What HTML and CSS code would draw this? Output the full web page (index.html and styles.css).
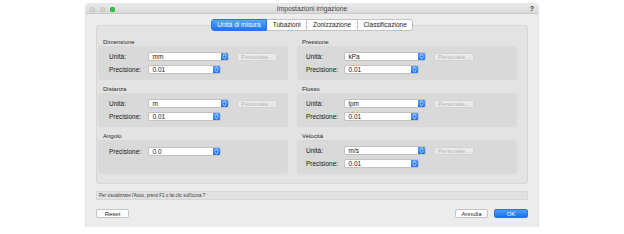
FILE: index.html
```html
<!DOCTYPE html>
<html lang="it">
<head>
<meta charset="utf-8">
<title>Impostazioni irrigazione</title>
<link rel="stylesheet" href="styles.css">
</head>
<body>
<div class="window">
  <div class="titlebar">
    <div class="lights">
      <span class="light off"></span>
      <span class="light off"></span>
      <span class="light green"></span>
    </div>
    <div class="title">Impostazioni irrigazione</div>
    <div class="help-q">?</div>
  </div>
  <div class="content">
    <div class="tabs">
      <span class="tab active">Unità di misura</span>
      <span class="tab">Tubazioni</span>
      <span class="tab">Zonizzazione</span>
      <span class="tab">Classificazione</span>
    </div>
    <div class="pane">
      <div class="grid">
        <div class="section left">
          <div class="sec-label">Dimensione</div>
          <div class="box">
            <div class="row"><span class="lbl">Unità:</span><span class="popup wide"><span class="val">mm</span><span class="stepper"><svg viewBox="0 0 7 9" width="7" height="9"><path d="M2 3.6 L3.5 2.2 L5 3.6 M2 5.4 L3.5 6.8 L5 5.4"/></svg></span></span><span class="btn-dis">Personale...</span></div>
            <div class="row"><span class="lbl">Precisione:</span><span class="popup narrow"><span class="val">0.01</span><span class="stepper"><svg viewBox="0 0 7 9" width="7" height="9"><path d="M2 3.6 L3.5 2.2 L5 3.6 M2 5.4 L3.5 6.8 L5 5.4"/></svg></span></span></div>
          </div>
        </div>
        <div class="section right">
          <div class="sec-label">Pressione</div>
          <div class="box">
            <div class="row"><span class="lbl">Unità:</span><span class="popup wide"><span class="val">kPa</span><span class="stepper"><svg viewBox="0 0 7 9" width="7" height="9"><path d="M2 3.6 L3.5 2.2 L5 3.6 M2 5.4 L3.5 6.8 L5 5.4"/></svg></span></span><span class="btn-dis">Personale...</span></div>
            <div class="row"><span class="lbl">Precisione:</span><span class="popup narrow"><span class="val">0.01</span><span class="stepper"><svg viewBox="0 0 7 9" width="7" height="9"><path d="M2 3.6 L3.5 2.2 L5 3.6 M2 5.4 L3.5 6.8 L5 5.4"/></svg></span></span></div>
          </div>
        </div>
        <div class="section left">
          <div class="sec-label">Distanza</div>
          <div class="box">
            <div class="row"><span class="lbl">Unità:</span><span class="popup wide"><span class="val">m</span><span class="stepper"><svg viewBox="0 0 7 9" width="7" height="9"><path d="M2 3.6 L3.5 2.2 L5 3.6 M2 5.4 L3.5 6.8 L5 5.4"/></svg></span></span><span class="btn-dis">Personale...</span></div>
            <div class="row"><span class="lbl">Precisione:</span><span class="popup narrow"><span class="val">0.01</span><span class="stepper"><svg viewBox="0 0 7 9" width="7" height="9"><path d="M2 3.6 L3.5 2.2 L5 3.6 M2 5.4 L3.5 6.8 L5 5.4"/></svg></span></span></div>
          </div>
        </div>
        <div class="section right">
          <div class="sec-label">Flusso</div>
          <div class="box">
            <div class="row"><span class="lbl">Unità:</span><span class="popup wide"><span class="val">lpm</span><span class="stepper"><svg viewBox="0 0 7 9" width="7" height="9"><path d="M2 3.6 L3.5 2.2 L5 3.6 M2 5.4 L3.5 6.8 L5 5.4"/></svg></span></span><span class="btn-dis">Personale...</span></div>
            <div class="row"><span class="lbl">Precisione:</span><span class="popup narrow"><span class="val">0.01</span><span class="stepper"><svg viewBox="0 0 7 9" width="7" height="9"><path d="M2 3.6 L3.5 2.2 L5 3.6 M2 5.4 L3.5 6.8 L5 5.4"/></svg></span></span></div>
          </div>
        </div>
        <div class="section left">
          <div class="sec-label">Angolo</div>
          <div class="box single">
            <div class="row"><span class="lbl">Precisione:</span><span class="popup narrow"><span class="val">0.0</span><span class="stepper"><svg viewBox="0 0 7 9" width="7" height="9"><path d="M2 3.6 L3.5 2.2 L5 3.6 M2 5.4 L3.5 6.8 L5 5.4"/></svg></span></span></div>
          </div>
        </div>
        <div class="section right">
          <div class="sec-label">Velocità</div>
          <div class="box">
            <div class="row"><span class="lbl">Unità:</span><span class="popup wide"><span class="val">m/s</span><span class="stepper"><svg viewBox="0 0 7 9" width="7" height="9"><path d="M2 3.6 L3.5 2.2 L5 3.6 M2 5.4 L3.5 6.8 L5 5.4"/></svg></span></span><span class="btn-dis">Personale...</span></div>
            <div class="row"><span class="lbl">Precisione:</span><span class="popup narrow"><span class="val">0.01</span><span class="stepper"><svg viewBox="0 0 7 9" width="7" height="9"><path d="M2 3.6 L3.5 2.2 L5 3.6 M2 5.4 L3.5 6.8 L5 5.4"/></svg></span></span></div>
          </div>
        </div>
      </div>
    </div>
    <div class="helpbar">Per visualizzare l'Aiuto, premi F1 o fai clic sull'icona ?</div>
    <div class="footer">
      <span class="btn">Reset</span>
      <span class="spacer"></span>
      <span class="btn">Annulla</span>
      <span class="btn primary">OK</span>
    </div>
  </div>
</div>
</body>
</html>
```
FILE: styles.css
```css
* { box-sizing: border-box; }
html, body { margin: 0; padding: 0; background: #ffffff; }
body { font-family: "Liberation Sans", Arial, sans-serif; color: #1e1e1e; }

.window {
  width: 452px;
  height: 223px;
  margin: 4px auto 0;
  background: #ececec;
  border-radius: 3px 3px 1px 1px;
  box-shadow: 0 0 0 0.5px #cfcfcf, 0 1px 2px rgba(0,0,0,0.12);
  overflow: hidden;
}

.titlebar {
  height: 10px;
  display: grid;
  grid-template-columns: 1fr auto 1fr;
  align-items: center;
  background: linear-gradient(#e9e9e9, #d8d8d8);
  border-bottom: 1px solid #c9c9c9;
}
.lights { display: flex; gap: 5px; padding-left: 4px; }
.light { width: 5px; height: 5px; border-radius: 50%; display: block; }
.light.off { background: #d3d3d3; box-shadow: inset 0 0 0 0.5px #bfbfbf; }
.light.green { background: #2bc840; box-shadow: inset 0 0 0 0.5px #22a834; }
.title { font-size: 6.7px; color: #444; line-height: 10px; }
.help-q { justify-self: end; padding-right: 4px; font-size: 7px; font-weight: bold; color: #333; line-height: 10px; }

.content { padding: 0 10px; }

.tabs {
  display: flex;
  justify-content: center;
  margin-top: 5px;
  height: 12px;
  position: relative;
  z-index: 2;
}
.tab {
  font-size: 6.5px;
  line-height: 10px;
  height: 12px;
  padding: 0 5.6px;
  background: #ffffff;
  border: 1px solid #c3c3c3;
  border-left: none;
  color: #1a1a1a;
}
.tab:first-child { border-left: 1px solid #c3c3c3; border-radius: 3px 0 0 3px; }
.tab:last-child { border-radius: 0 3px 3px 0; }
.tab.active {
  background: linear-gradient(#5aa4fc, #1f74f2);
  border-color: #2a76e8;
  color: #ffffff;
}

.pane {
  margin-top: -6px;
  height: 159px;
  background: #e3e3e3;
  border: 1px solid #d6d6d6;
  border-radius: 3px;
  padding: 7px 10px 0 1px;
}
.grid {
  display: grid;
  grid-template-columns: 190px 220px;
  column-gap: 9px;
}
.sec-label {
  font-size: 6px;
  line-height: 8px;
  height: 13px;
  padding-top: 5px;
  padding-left: 5px;
  color: #1f1f1f;
}
.box {
  height: 34px;
  background: #d9d9d9;
  border-radius: 3px;
  padding: 6px 0 0 11px;
}
.right .box { padding-left: 9px; }
.box.single { padding-top: 7px; }
.row {
  display: flex;
  align-items: center;
  height: 9px;
  margin-bottom: 4px;
}
.lbl {
  width: 39px;
  font-size: 6.5px;
  color: #161616;
}
.right .lbl { width: 38px; }

.popup {
  display: flex;
  height: 9px;
  background: #ffffff;
  border: 0.5px solid #c2c2c2;
  border-radius: 2px;
  overflow: hidden;
}
.popup.wide { width: 81px; }
.popup.narrow { width: 73px; }
.right .popup.wide { width: 82px; }
.right .popup.narrow { width: 75px; }
.val {
  flex: 1;
  font-size: 6.5px;
  line-height: 8px;
  padding-left: 3.5px;
  color: #161616;
}
.stepper {
  width: 7px;
  height: 100%;
  background: linear-gradient(#4f9bfb, #1d70ef);
  display: flex;
  align-items: center;
  justify-content: center;
}
.stepper svg { display: block; }
.stepper path {
  fill: none;
  stroke: #ffffff;
  stroke-width: 0.8;
  stroke-linecap: round;
  stroke-linejoin: round;
}

.btn-dis {
  margin-left: 8px;
  width: 40px;
  height: 8px;
  border: 0.5px solid #d2d2d2;
  background: #eaeaea;
  border-radius: 1.5px;
  font-size: 6px;
  line-height: 7px;
  text-align: center;
  color: #b3b3b3;
}

.helpbar {
  margin-top: 7px;
  height: 9px;
  background: #e1e1e1;
  border: 0.5px solid #d6d6d6;
  font-size: 4.5px;
  line-height: 8px;
  padding-left: 2px;
  color: #3a3a3a;
}

.footer {
  display: flex;
  align-items: center;
  margin-top: 9px;
  height: 9px;
  gap: 6px;
}
.spacer { flex: 1; }
.btn {
  width: 33px;
  height: 9px;
  background: #ffffff;
  border: 0.5px solid #c4c4c4;
  border-radius: 2px;
  font-size: 6px;
  line-height: 8px;
  text-align: center;
  color: #1e1e1e;
}
.btn.primary {
  width: 34px;
  background: linear-gradient(#4f9bfb, #1a6ff0);
  border-color: #2c74e6;
  color: #ffffff;
}
```
